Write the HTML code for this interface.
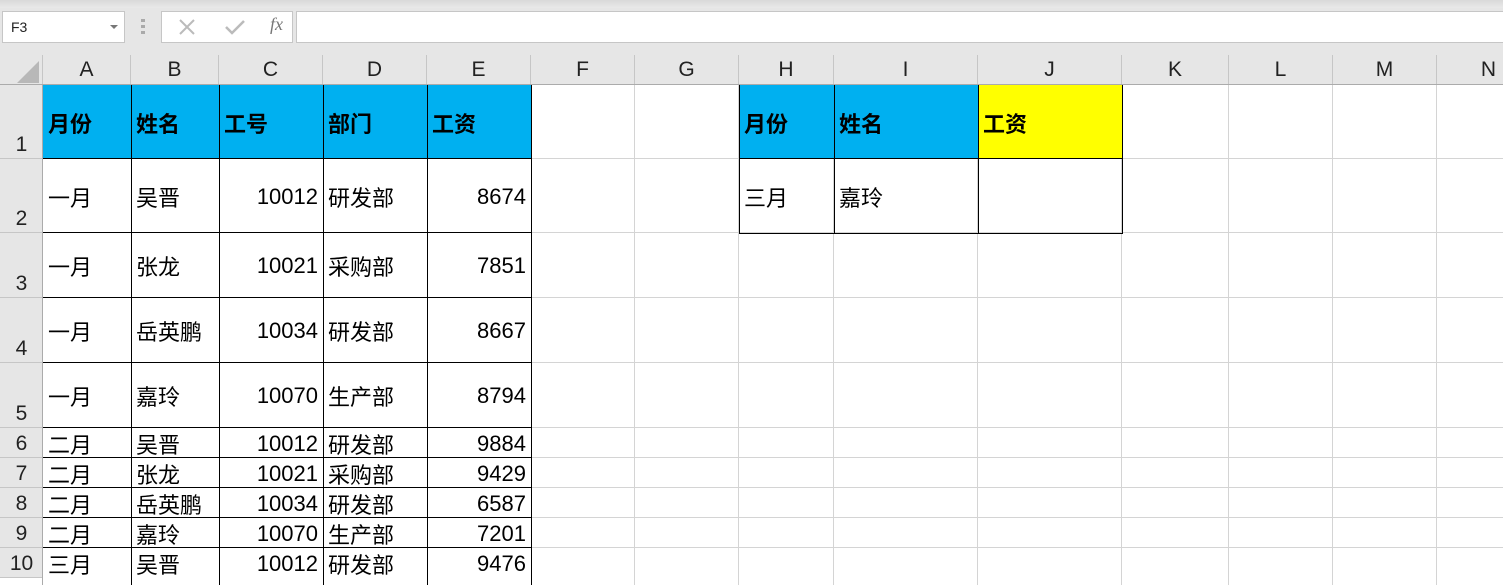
<!DOCTYPE html>
<html><head><meta charset="utf-8"><style>
body{margin:0;width:1503px;height:568px;overflow:hidden;background:#fff;position:relative;font-family:"Liberation Sans","Noto Sans CJK SC",sans-serif}
.a{position:absolute;box-sizing:border-box}
.c{position:absolute;box-sizing:border-box;display:flex;align-items:center;font-size:22px;color:#000;padding:1px 5px 0;white-space:nowrap;overflow:hidden}
.r{justify-content:flex-end}
.b{font-weight:bold}
.ch{position:absolute;top:55px;height:30px;display:flex;align-items:center;justify-content:center;font-size:21px;color:#222;border-right:1px solid #c6c6c6;box-sizing:border-box;background:#e6e6e6}
.rh{position:absolute;left:0;width:43px;display:flex;align-items:flex-end;justify-content:center;font-size:21px;color:#222;border-bottom:1px solid #c6c6c6;box-sizing:border-box;background:#e6e6e6;padding-bottom:1px}
.h{position:absolute;left:43px;width:1460px;height:1px;background:#d4d4d4}
.v{position:absolute;top:85px;width:1px;height:500px;background:#d4d4d4}
</style></head><body>
<div class="a" style="left:0;top:0;width:1503px;height:55px;background:#e6e6e6"></div>
<div class="a" style="left:0;top:0;width:1503px;height:8px;background:linear-gradient(#d9d9d9,#e9e9e9)"></div>
<div class="a" style="left:2px;top:11px;width:123px;height:32px;background:#fff;border:1px solid #c6c6c6;font-size:14px;padding:7px 0 0 8px;color:#222">F3</div>
<div class="a" style="left:110px;top:25px;width:0;height:0;border-left:4px solid transparent;border-right:4px solid transparent;border-top:4px solid #777"></div>
<div class="a" style="left:141px;top:19px;width:4px;height:16px;background:repeating-linear-gradient(#aaa 0 3px,transparent 3px 6px)"></div>
<div class="a" style="left:161px;top:11px;width:132px;height:32px;background:#fff;border:1px solid #c6c6c6"></div>
<svg class="a" style="left:178px;top:18px" width="18" height="18"><path d="M2 2L16 16M16 2L2 16" stroke="#bbb" stroke-width="2"/></svg>
<svg class="a" style="left:224px;top:18px" width="22" height="18"><path d="M2 9L8 15L20 3" stroke="#bbb" stroke-width="2.5" fill="none"/></svg>
<div class="a" style="left:270px;top:14px;font-size:18px;color:#777;font-style:italic;font-family:'Liberation Serif',serif">fx</div>
<div class="a" style="left:296px;top:11px;width:1210px;height:32px;background:#fff;border:1px solid #c6c6c6"></div>
<div class="a" style="left:0;top:55px;width:43px;height:30px;background:#e6e6e6;border-right:1px solid #c6c6c6"></div>
<div class="a" style="left:17px;top:61px;width:0;height:0;border-left:22px solid transparent;border-bottom:22px solid #b8b8b8"></div>
<div class="ch" style="left:43px;width:88px">A</div>
<div class="ch" style="left:131px;width:88px">B</div>
<div class="ch" style="left:219px;width:104px">C</div>
<div class="ch" style="left:323px;width:104px">D</div>
<div class="ch" style="left:427px;width:104px">E</div>
<div class="ch" style="left:531px;width:104px">F</div>
<div class="ch" style="left:635px;width:104px">G</div>
<div class="ch" style="left:739px;width:95px">H</div>
<div class="ch" style="left:834px;width:144px">I</div>
<div class="ch" style="left:978px;width:144px">J</div>
<div class="ch" style="left:1122px;width:107px">K</div>
<div class="ch" style="left:1229px;width:104px">L</div>
<div class="ch" style="left:1333px;width:104px">M</div>
<div class="ch" style="left:1437px;width:104px">N</div>
<div class="a" style="left:0;top:84px;width:1503px;height:1px;background:#ababab"></div>
<div class="rh" style="top:85px;height:74px">1</div>
<div class="rh" style="top:159px;height:74px">2</div>
<div class="rh" style="top:233px;height:65px">3</div>
<div class="rh" style="top:298px;height:65px">4</div>
<div class="rh" style="top:363px;height:65px">5</div>
<div class="rh" style="top:428px;height:30px">6</div>
<div class="rh" style="top:458px;height:30px">7</div>
<div class="rh" style="top:488px;height:30px">8</div>
<div class="rh" style="top:518px;height:30px">9</div>
<div class="rh" style="top:548px;height:30px">10</div>
<div class="a" style="left:42px;top:85px;width:1px;height:500px;background:#ababab"></div>
<div class="v" style="left:634px"></div>
<div class="v" style="left:738px"></div>
<div class="v" style="left:833px"></div>
<div class="v" style="left:977px"></div>
<div class="v" style="left:1121px"></div>
<div class="v" style="left:1228px"></div>
<div class="v" style="left:1332px"></div>
<div class="v" style="left:1436px"></div>
<div class="h" style="top:158px"></div>
<div class="h" style="top:232px"></div>
<div class="h" style="top:297px"></div>
<div class="h" style="top:362px"></div>
<div class="h" style="top:427px"></div>
<div class="h" style="top:457px"></div>
<div class="h" style="top:487px"></div>
<div class="h" style="top:517px"></div>
<div class="h" style="top:547px"></div>
<div class="a" style="left:43px;top:85px;width:488px;height:74px;background:#00b0f0"></div>
<div class="a" style="left:739px;top:85px;width:239px;height:74px;background:#00b0f0"></div>
<div class="a" style="left:978px;top:85px;width:144px;height:74px;background:#ffff00"></div>
<div class="a" style="left:43px;top:85px;width:489px;height:500px;border-right:1px solid #000"></div>
<div class="a" style="left:131px;top:85px;width:1px;height:500px;background:#000"></div>
<div class="a" style="left:219px;top:85px;width:1px;height:500px;background:#000"></div>
<div class="a" style="left:323px;top:85px;width:1px;height:500px;background:#000"></div>
<div class="a" style="left:427px;top:85px;width:1px;height:500px;background:#000"></div>
<div class="a" style="left:43px;top:158px;width:489px;height:1px;background:#000"></div>
<div class="a" style="left:43px;top:232px;width:489px;height:1px;background:#000"></div>
<div class="a" style="left:43px;top:297px;width:489px;height:1px;background:#000"></div>
<div class="a" style="left:43px;top:362px;width:489px;height:1px;background:#000"></div>
<div class="a" style="left:43px;top:427px;width:489px;height:1px;background:#000"></div>
<div class="a" style="left:43px;top:457px;width:489px;height:1px;background:#000"></div>
<div class="a" style="left:43px;top:487px;width:489px;height:1px;background:#000"></div>
<div class="a" style="left:43px;top:517px;width:489px;height:1px;background:#000"></div>
<div class="a" style="left:43px;top:547px;width:489px;height:1px;background:#000"></div>
<div class="a" style="left:739px;top:85px;width:384px;height:149px;border-left:1px solid #000;border-right:1px solid #000;border-bottom:1px solid #000"></div>
<div class="a" style="left:834px;top:85px;width:1px;height:148px;background:#000"></div>
<div class="a" style="left:978px;top:85px;width:1px;height:148px;background:#000"></div>
<div class="a" style="left:739px;top:158px;width:384px;height:1px;background:#000"></div>
<div class="c b" style="left:43px;top:85px;width:88px;height:74px">月份</div>
<div class="c b" style="left:131px;top:85px;width:88px;height:74px">姓名</div>
<div class="c b" style="left:219px;top:85px;width:104px;height:74px">工号</div>
<div class="c b" style="left:323px;top:85px;width:104px;height:74px">部门</div>
<div class="c b" style="left:427px;top:85px;width:104px;height:74px">工资</div>
<div class="c b" style="left:739px;top:85px;width:95px;height:74px">月份</div>
<div class="c b" style="left:834px;top:85px;width:144px;height:74px">姓名</div>
<div class="c b" style="left:978px;top:85px;width:144px;height:74px">工资</div>
<div class="c" style="left:43px;top:159px;width:88px;height:74px">一月</div>
<div class="c" style="left:131px;top:159px;width:88px;height:74px">吴晋</div>
<div class="c r" style="left:219px;top:159px;width:104px;height:74px">10012</div>
<div class="c" style="left:323px;top:159px;width:104px;height:74px">研发部</div>
<div class="c r" style="left:427px;top:159px;width:104px;height:74px">8674</div>
<div class="c" style="left:43px;top:233px;width:88px;height:65px">一月</div>
<div class="c" style="left:131px;top:233px;width:88px;height:65px">张龙</div>
<div class="c r" style="left:219px;top:233px;width:104px;height:65px">10021</div>
<div class="c" style="left:323px;top:233px;width:104px;height:65px">采购部</div>
<div class="c r" style="left:427px;top:233px;width:104px;height:65px">7851</div>
<div class="c" style="left:43px;top:298px;width:88px;height:65px">一月</div>
<div class="c" style="left:131px;top:298px;width:88px;height:65px">岳英鹏</div>
<div class="c r" style="left:219px;top:298px;width:104px;height:65px">10034</div>
<div class="c" style="left:323px;top:298px;width:104px;height:65px">研发部</div>
<div class="c r" style="left:427px;top:298px;width:104px;height:65px">8667</div>
<div class="c" style="left:43px;top:363px;width:88px;height:65px">一月</div>
<div class="c" style="left:131px;top:363px;width:88px;height:65px">嘉玲</div>
<div class="c r" style="left:219px;top:363px;width:104px;height:65px">10070</div>
<div class="c" style="left:323px;top:363px;width:104px;height:65px">生产部</div>
<div class="c r" style="left:427px;top:363px;width:104px;height:65px">8794</div>
<div class="c" style="left:43px;top:428px;width:88px;height:30px">二月</div>
<div class="c" style="left:131px;top:428px;width:88px;height:30px">吴晋</div>
<div class="c r" style="left:219px;top:428px;width:104px;height:30px">10012</div>
<div class="c" style="left:323px;top:428px;width:104px;height:30px">研发部</div>
<div class="c r" style="left:427px;top:428px;width:104px;height:30px">9884</div>
<div class="c" style="left:43px;top:458px;width:88px;height:30px">二月</div>
<div class="c" style="left:131px;top:458px;width:88px;height:30px">张龙</div>
<div class="c r" style="left:219px;top:458px;width:104px;height:30px">10021</div>
<div class="c" style="left:323px;top:458px;width:104px;height:30px">采购部</div>
<div class="c r" style="left:427px;top:458px;width:104px;height:30px">9429</div>
<div class="c" style="left:43px;top:488px;width:88px;height:30px">二月</div>
<div class="c" style="left:131px;top:488px;width:88px;height:30px">岳英鹏</div>
<div class="c r" style="left:219px;top:488px;width:104px;height:30px">10034</div>
<div class="c" style="left:323px;top:488px;width:104px;height:30px">研发部</div>
<div class="c r" style="left:427px;top:488px;width:104px;height:30px">6587</div>
<div class="c" style="left:43px;top:518px;width:88px;height:30px">二月</div>
<div class="c" style="left:131px;top:518px;width:88px;height:30px">嘉玲</div>
<div class="c r" style="left:219px;top:518px;width:104px;height:30px">10070</div>
<div class="c" style="left:323px;top:518px;width:104px;height:30px">生产部</div>
<div class="c r" style="left:427px;top:518px;width:104px;height:30px">7201</div>
<div class="c" style="left:43px;top:548px;width:88px;height:30px">三月</div>
<div class="c" style="left:131px;top:548px;width:88px;height:30px">吴晋</div>
<div class="c r" style="left:219px;top:548px;width:104px;height:30px">10012</div>
<div class="c" style="left:323px;top:548px;width:104px;height:30px">研发部</div>
<div class="c r" style="left:427px;top:548px;width:104px;height:30px">9476</div>
<div class="c" style="left:739px;top:159px;width:95px;height:74px">三月</div>
<div class="c" style="left:834px;top:159px;width:144px;height:74px">嘉玲</div>
</body></html>
